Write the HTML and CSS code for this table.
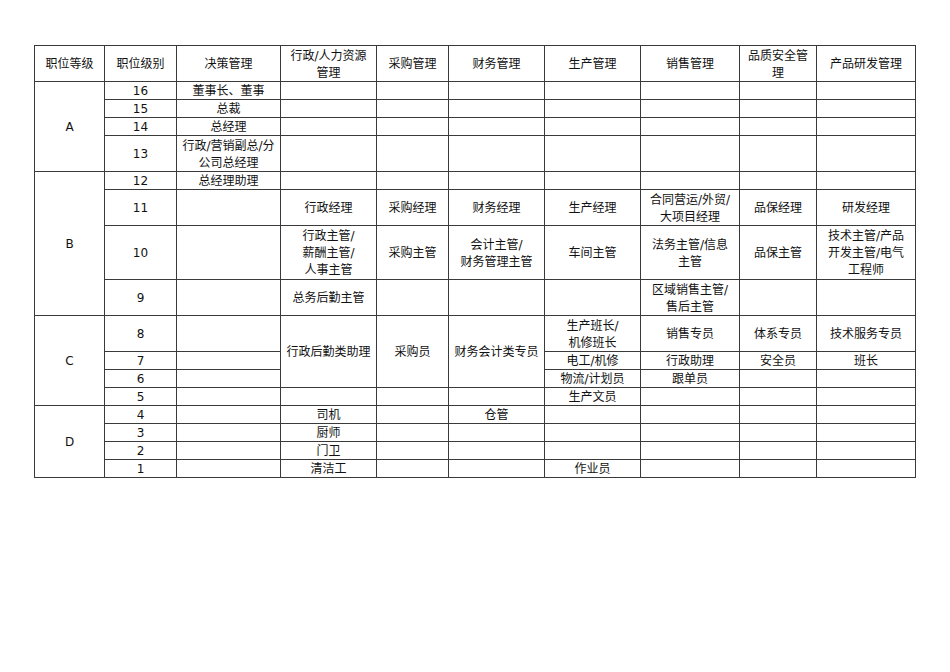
FILE: index.html
```html
<!DOCTYPE html>
<html lang="zh-CN">
<head>
<meta charset="utf-8">
<title>职位等级表</title>
<link rel="stylesheet" href="styles.css">
</head>
<body>
<div class="page">
<table class="grid">
  <colgroup>
    <col class="c1"><col class="c2"><col class="c3"><col class="c4"><col class="c5">
    <col class="c6"><col class="c7"><col class="c8"><col class="c9"><col class="c10">
  </colgroup>
  <thead>
    <tr class="h2">
      <th>职位等级</th><th>职位级别</th><th>决策管理</th><th>行政/人力资源<br>管理</th><th>采购管理</th>
      <th>财务管理</th><th>生产管理</th><th>销售管理</th><th>品质安全管<br>理</th><th>产品研发管理</th>
    </tr>
  </thead>
  <tbody>
    <tr class="h1"><td rowspan="4">A</td><td>16</td><td>董事长、董事</td><td></td><td></td><td></td><td></td><td></td><td></td><td></td></tr>
    <tr class="h1"><td>15</td><td>总裁</td><td></td><td></td><td></td><td></td><td></td><td></td><td></td></tr>
    <tr class="h1"><td>14</td><td>总经理</td><td></td><td></td><td></td><td></td><td></td><td></td><td></td></tr>
    <tr class="h2"><td>13</td><td>行政/营销副总/分<br>公司总经理</td><td></td><td></td><td></td><td></td><td></td><td></td><td></td></tr>

    <tr class="h1"><td rowspan="4">B</td><td>12</td><td>总经理助理</td><td></td><td></td><td></td><td></td><td></td><td></td><td></td></tr>
    <tr class="h2"><td>11</td><td></td><td>行政经理</td><td>采购经理</td><td>财务经理</td><td>生产经理</td><td>合同营运/外贸/<br>大项目经理</td><td>品保经理</td><td>研发经理</td></tr>
    <tr class="h3"><td>10</td><td></td><td>行政主管/<br>薪酬主管/<br>人事主管</td><td>采购主管</td><td>会计主管/<br>财务管理主管</td><td>车间主管</td><td>法务主管/信息<br>主管</td><td>品保主管</td><td>技术主管/产品<br>开发主管/电气<br>工程师</td></tr>
    <tr class="h2"><td>9</td><td></td><td>总务后勤主管</td><td></td><td></td><td></td><td>区域销售主管/<br>售后主管</td><td></td><td></td></tr>

    <tr class="h2"><td rowspan="4">C</td><td>8</td><td></td><td rowspan="3">行政后勤类助理</td><td rowspan="3">采购员</td><td rowspan="3">财务会计类专员</td><td>生产班长/<br>机修班长</td><td>销售专员</td><td>体系专员</td><td>技术服务专员</td></tr>
    <tr class="h1"><td>7</td><td></td><td>电工/机修</td><td>行政助理</td><td>安全员</td><td>班长</td></tr>
    <tr class="h1"><td>6</td><td></td><td>物流/计划员</td><td>跟单员</td><td></td><td></td></tr>
    <tr class="h1"><td>5</td><td></td><td></td><td></td><td></td><td>生产文员</td><td></td><td></td><td></td></tr>

    <tr class="h1"><td rowspan="4">D</td><td>4</td><td></td><td>司机</td><td></td><td>仓管</td><td></td><td></td><td></td><td></td></tr>
    <tr class="h1"><td>3</td><td></td><td>厨师</td><td></td><td></td><td></td><td></td><td></td><td></td></tr>
    <tr class="h1"><td>2</td><td></td><td>门卫</td><td></td><td></td><td></td><td></td><td></td><td></td></tr>
    <tr class="h1"><td>1</td><td></td><td>清洁工</td><td></td><td></td><td>作业员</td><td></td><td></td><td></td></tr>
  </tbody>
</table>
</div>
</body>
</html>
```
FILE: styles.css
```css
html, body {
  margin: 0;
  padding: 0;
  background: #ffffff;
}

.page {
  padding: 45px 0 0 34px;
}

.grid {
  border-collapse: collapse;
  table-layout: fixed;
  width: 882px;
  font-family: "DejaVu Sans", "Noto Sans CJK SC", sans-serif;
  font-size: 12px;
  color: #111111;
}

.grid th,
.grid td {
  border: 1px solid #3a3a3a;
  padding: 2px 0 0 0;
  text-align: center;
  vertical-align: middle;
  font-weight: normal;
  line-height: 16.5px;
  white-space: nowrap;
  overflow: hidden;
}

.c1 { width: 70px; }
.c2 { width: 72px; }
.c3 { width: 104px; }
.c4 { width: 96px; }
.c5 { width: 72px; }
.c6 { width: 96px; }
.c7 { width: 96px; }
.c8 { width: 99px; }
.c9 { width: 77px; }
.c10 { width: 99px; }

.h1 { height: 18px; }
.h2 { height: 36px; }
.h3 { height: 54px; }

.h1 td { line-height: 15px; }
.h3 td { line-height: 17px; }
```
